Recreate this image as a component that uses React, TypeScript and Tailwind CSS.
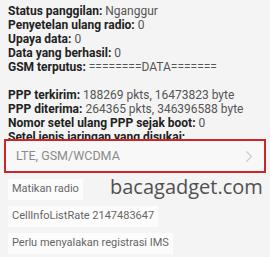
const info: [string, string][] = [
  ['Status panggilan:', 'Nganggur'],
  ['Penyetelan ulang radio:', '0'],
  ['Upaya data:', '0'],
  ['Data yang berhasil:', '0'],
  ['GSM terputus:', '========DATA======='],
];

const ppp: [string, string][] = [
  ['PPP terkirim:', '188269 pkts, 16473823 byte'],
  ['PPP diterima:', '264365 pkts, 346396588 byte'],
  ['Nomor setel ulang PPP sejak boot:', '0'],
];

function Line({ label, value }: { label: string; value: string }) {
  return (
    <p className="whitespace-nowrap">
      <span className="font-bold text-[#222]">{label}</span>{' '}
      <span className="text-[#555]">{value}</span>
    </p>
  );
}

function Chip({ children }: { children: string }) {
  return (
    <div className="inline-flex h-[21px] items-center whitespace-nowrap bg-[#fcfcfc] px-[4px] text-[11px] text-[#666]">
      {children}
    </div>
  );
}

export default function App() {
  return (
    <div
      className="relative h-[257px] w-[270px] overflow-hidden bg-[#f4f4f4]"
      style={{ fontFamily: 'Roboto, "Liberation Sans", sans-serif' }}
    >
      <div className="px-[8px] pt-[4px] text-[12px] leading-[14px]">
        {info.map(([l, v]) => (
          <Line key={l} label={l} value={v} />
        ))}
        <div className="h-[14px]" />
        {ppp.map(([l, v]) => (
          <Line key={l} label={l} value={v} />
        ))}
        <p className="whitespace-nowrap font-bold text-[#222]">Setel jenis jaringan yang disukai:</p>
      </div>

      <div className="relative mx-[4px] mt-[-5px] flex h-[34px] items-center justify-between border-2 border-[#c62828] bg-[#f8f8f8] pl-[10px] pr-[12px]">
        <span className="text-[12.5px] text-[#8a8a8a]">LTE, GSM/WCDMA</span>
        <svg width="6" height="11" viewBox="0 0 6 11" fill="none">
          <path d="M0.5 0.5l5 5-5 5" stroke="#c8c8c8" strokeWidth="1.1" />
        </svg>
      </div>

      <div className="flex flex-col items-start gap-[6px] px-[8px] pt-[6px]">
        <Chip>Matikan radio</Chip>
        <Chip>CellInfoListRate 2147483647</Chip>
        <Chip>Perlu menyalakan registrasi IMS</Chip>
      </div>

      <span
        className="absolute left-[110px] top-[177px] text-[20px] leading-none text-[#505050]"
        style={{ fontFamily: '"Open Sans", sans-serif' }}
      >
        bacagadget.com
      </span>
    </div>
  );
}
